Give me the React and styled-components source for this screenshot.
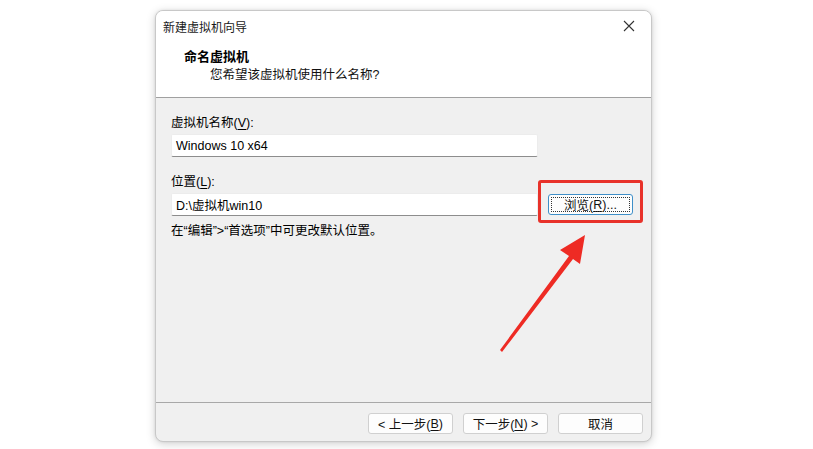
import React from "react";
import styled, { createGlobalStyle } from "styled-components";

const GlobalStyle = createGlobalStyle`
  html, body {
    margin: 0;
    padding: 0;
    background: #ffffff;
  }
  body {
    font-family: "Liberation Sans", "Noto Sans CJK SC", sans-serif;
    color: #000;
  }
`;

const Page = styled.div`
  width: 813px;
  height: 449px;
  padding: 10px 0 0 155px;
  box-sizing: border-box;
  position: relative;
  overflow: hidden;
`;

const Dialog = styled.div`
  width: 497px;
  height: 432px;
  box-sizing: border-box;
  border: 1px solid #c8c8c8;
  border-radius: 8px;
  overflow: hidden;
  display: flex;
  flex-direction: column;
  background: #f0f0f0;
  box-shadow: 0 2px 10px rgba(0, 0, 0, 0.18), 0 0 3px rgba(0, 0, 0, 0.08);
`;

const Header = styled.div`
  height: 86px;
  background: #ffffff;
  border-bottom: 1px solid #a0a0a0;
  display: flex;
  flex-direction: column;
  flex-shrink: 0;
`;

const TitleBar = styled.div`
  height: 30px;
  display: flex;
  align-items: center;
  justify-content: space-between;
  padding: 0 10px 0 7px;
  font-size: 12px;
  color: #1a1a1a;
`;

const CloseButton = styled.div`
  width: 24px;
  height: 24px;
  display: flex;
  align-items: center;
  justify-content: center;
`;

const HeaderText = styled.div`
  padding: 8px 0 0 28px;
  display: flex;
  flex-direction: column;
  gap: 2px;
`;

const PageTitle = styled.div`
  font-size: 13px;
  font-weight: 700;
  line-height: 16px;
`;

const PageSub = styled.div`
  font-size: 12.5px;
  line-height: 16px;
  padding-left: 26px;
  color: #111;
`;

const Body = styled.div`
  flex: 1;
  padding: 17px 0 0 15px;
  display: flex;
  flex-direction: column;
  font-size: 12.5px;
`;

const Label = styled.div`
  line-height: 16px;
  margin-bottom: 3px;
  margin-top: ${(p) => p.$top || 0}px;
`;

const Row = styled.div`
  display: flex;
  align-items: center;
  gap: 10px;
`;

const Field = styled.div`
  width: 367px;
  height: 23px;
  box-sizing: border-box;
  background: #ffffff;
  border: 1px solid #ececec;
  border-bottom: 1px solid #8d8d8d;
  border-radius: 2px;
  display: flex;
  align-items: center;
  padding-left: 4px;
  font-size: 12.5px;
`;

const Mark = styled.span`
  position: relative;
  display: inline-block;
  width: 85px;
  height: 21px;
`;

const Highlight = styled.div`
  position: absolute;
  left: -10px;
  top: -14px;
  width: 105px;
  height: 43px;
  box-sizing: border-box;
  border: 3px solid #e8322a;
  border-radius: 3px;
  pointer-events: none;
`;

const Button = styled.div`
  width: ${(p) => p.$w || 85}px;
  height: ${(p) => p.$h || 21}px;
  box-sizing: border-box;
  background: #fdfdfd;
  border: 1px solid ${(p) => (p.$focus ? "#3f8fc8" : "#d0d0d0")};
  border-radius: 3px;
  display: flex;
  align-items: center;
  justify-content: center;
  font-size: 12.5px;
  color: #111;
  position: relative;
  ${(p) =>
    p.$focus &&
    `
    &::after {
      content: "";
      position: absolute;
      inset: 2px;
      border: 1px dotted #333;
    }
  `}
`;

const U = styled.span`
  text-decoration: underline;
  text-underline-offset: 2px;
`;

const Hint = styled.div`
  margin-top: 7px;
  line-height: 16px;
`;

const Footer = styled.div`
  height: 39px;
  flex-shrink: 0;
  border-top: 1px solid #a8a8a8;
  display: flex;
  align-items: flex-start;
  justify-content: flex-end;
  gap: 10px;
  padding: 10px 8px 0 0;
  box-sizing: border-box;
`;

const Arrow = styled.svg`
  position: absolute;
  left: 490px;
  top: 225px;
  pointer-events: none;
`;

export default function App() {
  return (
    <>
      <GlobalStyle />
      <Page>
        <Dialog>
          <Header>
            <TitleBar>
              <span>新建虚拟机向导</span>
              <CloseButton>
                <svg width="12" height="12" viewBox="0 0 12 12">
                  <path d="M1 1 L11 11 M11 1 L1 11" stroke="#333" strokeWidth="1.1" />
                </svg>
              </CloseButton>
            </TitleBar>
            <HeaderText>
              <PageTitle>命名虚拟机</PageTitle>
              <PageSub>您希望该虚拟机使用什么名称?</PageSub>
            </HeaderText>
          </Header>
          <Body>
            <Label>
              虚拟机名称(<U>V</U>):
            </Label>
            <Field>Windows 10 x64</Field>
            <Label $top={17}>
              位置(<U>L</U>):
            </Label>
            <Row>
              <Field>D:\虚拟机win10</Field>
              <Mark>
                <Highlight />
                <Button $focus>
                  浏览(<U>R</U>)...
                </Button>
              </Mark>
            </Row>
            <Hint>在“编辑”&gt;“首选项”中可更改默认位置。</Hint>
          </Body>
          <Footer>
            <Button>
              &lt; 上一步(<U>B</U>)
            </Button>
            <Button>
              下一步(<U>N</U>) &gt;
            </Button>
            <Button>取消</Button>
          </Footer>
        </Dialog>
        <Arrow width="110" height="135" viewBox="0 0 110 135">
          <polygon
            points="10,125 79,31 70,25 95,10 90,39 83,34 12,127"
            fill="#ee2b24"
          />
        </Arrow>
      </Page>
    </>
  );
}
